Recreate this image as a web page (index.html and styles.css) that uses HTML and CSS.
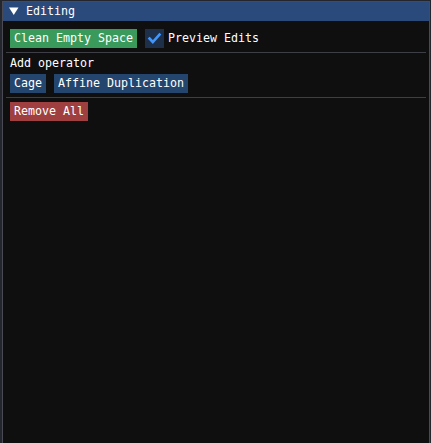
FILE: index.html
```html
<!DOCTYPE html>
<html>
<head>
<meta charset="utf-8">
<link rel="stylesheet" href="styles.css">
</head>
<body>
<div class="window">
  <div class="titlebar">
    <svg class="arrow" width="10" height="9" viewBox="0 0 10 9"><polygon points="0,0.5 9.5,0.5 4.75,8" fill="#fff"/></svg>
    <span class="title">Editing</span>
  </div>
  <div class="content">
    <div class="row">
      <div class="btn green">Clean Empty Space</div>
      <div class="check">
        <span class="box"><svg width="19" height="19" viewBox="0 0 19 19"><polyline points="4.5,9.5 7.8,13 14.5,5.5" fill="none" stroke="#4296fa" stroke-width="2.6" stroke-linecap="square" stroke-linejoin="miter"/></svg></span>
        <span class="label">Preview Edits</span>
      </div>
    </div>
    <div class="sep"></div>
    <div class="text">Add operator</div>
    <div class="row">
      <div class="btn blue">Cage</div>
      <div class="btn blue">Affine Duplication</div>
    </div>
    <div class="sep"></div>
    <div class="row">
      <div class="btn red">Remove All</div>
    </div>
  </div>
</div>
</body>
</html>
```
FILE: styles.css
```css
html, body {
  margin: 0;
  padding: 0;
  height: 100%;
  background: #23262d;
  overflow: hidden;
}
body {
  font-family: "DejaVu Sans Mono", "Liberation Mono", monospace;
  font-size: 11.63px;
  color: #ffffff;
}
.window {
  position: absolute;
  left: 2px;
  top: 1px;
  width: 426px;
  height: 460px;
  background: #0f0f0f;
  border: 1px solid #4a4a55;
}
.titlebar {
  height: 19px;
  background: #294a7a;
  display: flex;
  align-items: center;
  line-height: 13px;
}
.arrow {
  margin-left: 6px;
  margin-right: 7px;
  margin-top: -1px;
}
.title {
  line-height: 13px;
}
.content {
  padding: 8px 0 0 0;
  display: flex;
  flex-direction: column;
  gap: 4px;
}
.row {
  display: flex;
  gap: 8px;
  padding-left: 7px;
  height: 19px;
}
.btn {
  height: 19px;
  line-height: 19px;
  padding: 0 4px;
  white-space: nowrap;
}
.green { background: #3a9a5b; }
.blue { background: #24456d; }
.red { background: #a03f3f; }
.check {
  display: flex;
  align-items: center;
  gap: 4px;
}
.box {
  width: 19px;
  height: 19px;
  background: #1d2f49;
  display: block;
}
.box svg { display: block; }
.label {
  line-height: 19px;
  white-space: nowrap;
}
.sep {
  height: 1px;
  background: #3e3e47;
  margin: 0 3px;
}
.text {
  height: 13px;
  line-height: 13px;
  padding-left: 7px;
}
```
